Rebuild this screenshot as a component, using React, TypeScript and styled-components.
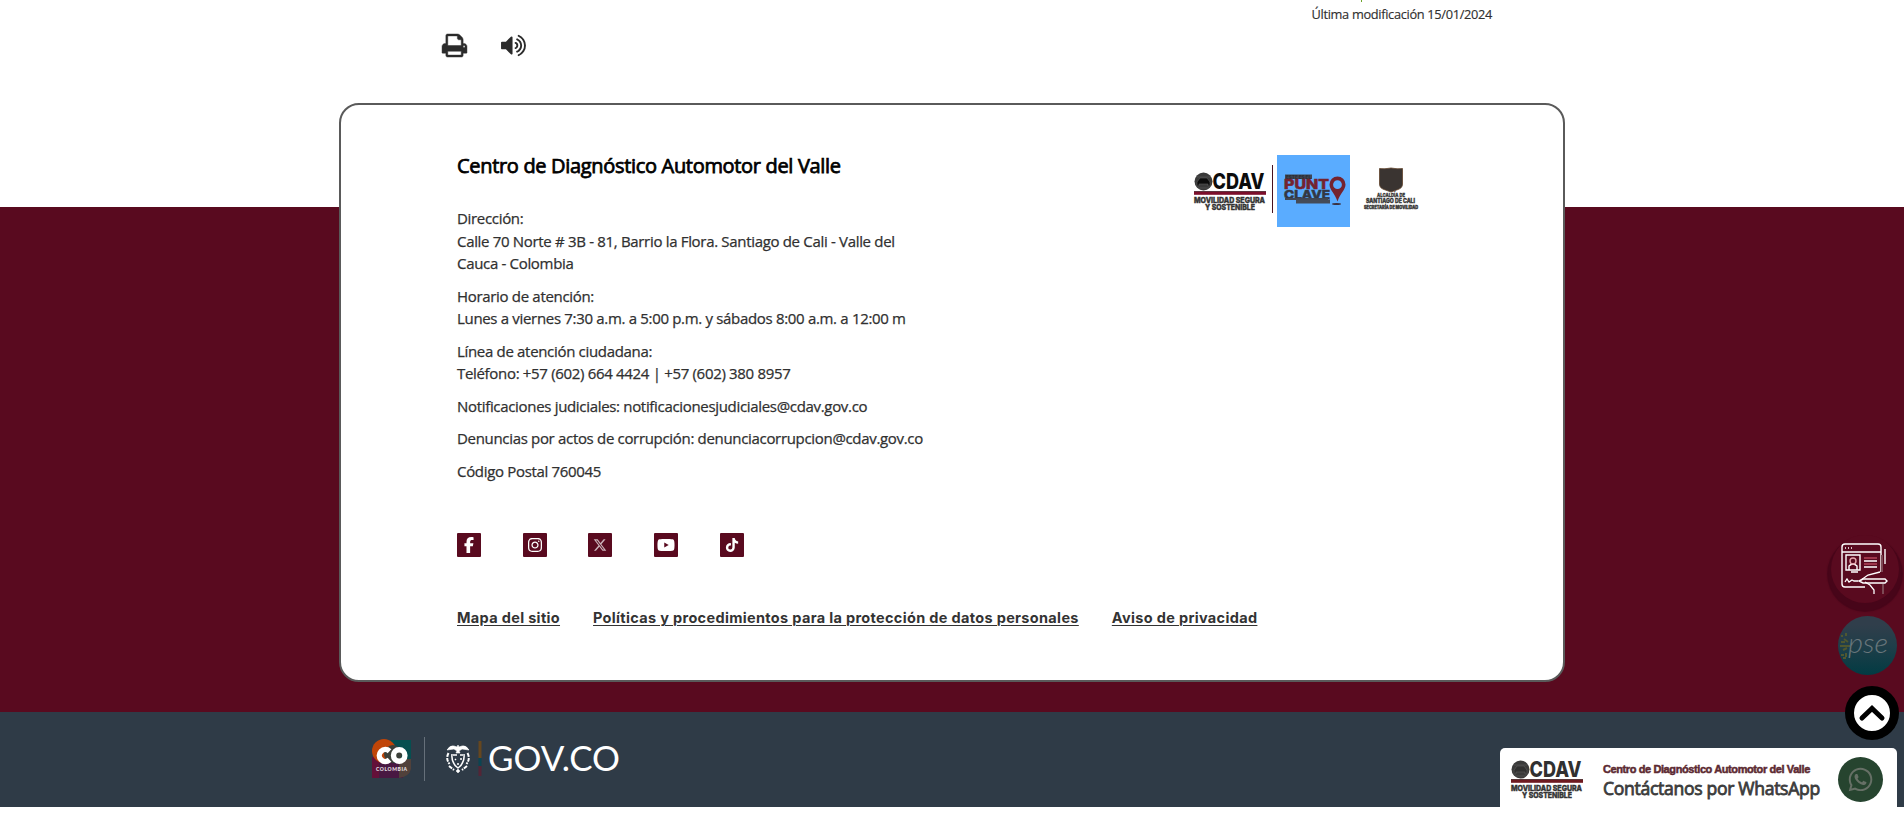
import React from 'react';
import styled, { createGlobalStyle } from 'styled-components';
import { FaFacebookF, FaYoutube, FaTiktok, FaXTwitter, FaInstagram, FaWhatsapp } from 'react-icons/fa6';

const WINE = '#590a1f';
const NAVY = '#2f3b47';

const GlobalStyle = createGlobalStyle`
  * { box-sizing: border-box; }
  body {
    margin: 0;
    background: #fff;
    color: #303030;
    font-family: 'Open Sans', sans-serif;
    font-size: 15px;
    letter-spacing: -0.32px;
    overflow: hidden;
  }
  svg { display: block; flex: none; overflow: visible; }
`;

const Page = styled.div`
  position: relative;
  height: 819px;
  display: flex;
  flex-direction: column;
  overflow: hidden;
`;

const FooterArea = styled.div`
  height: 712px;
  display: flex;
  flex-direction: column;
  align-items: center;
  background: linear-gradient(to bottom, #fff 207px, ${WINE} 207px);
`;

const PageTools = styled.div`
  width: 1051px;
  height: 103px;
  flex: none;
  display: flex;
  justify-content: space-between;
  padding: 0 0 0 15px;
`;

const ToolIcons = styled.div`
  display: flex;
  gap: 34px;
  padding-top: 34px;
`;

const Modified = styled.div`
  width: 166px;
  padding-top: 5px;
  font-size: 12.8px;
  line-height: 19px;
  white-space: nowrap;
  -webkit-text-stroke: 0.15px #303030;
`;

const Tail = styled.i`
  position: absolute;
  top: 0;
  left: 1361px;
  width: 1px;
  height: 2px;
  background: #6da32b;
`;

const Card = styled.main`
  width: 1226px;
  height: 579px;
  flex: none;
  padding: 45px 114px 0 116px;
  background: #fff;
  border: 2px solid #5a5a5a;
  border-radius: 20px;
`;

const CardTop = styled.div`
  display: flex;
  justify-content: space-between;
`;

const Contact = styled.section`
  width: 476px;
  height: 383px;
`;

const Title = styled.h2`
  margin: 0;
  padding: 1px 0 26.4px;
  font-size: 20px;
  font-weight: 400;
  line-height: 30px;
  color: #000;
  -webkit-text-stroke: 0.75px #000;
  white-space: nowrap;
`;

const Paragraph = styled.p`
  margin: 0 0 10px;
  line-height: 22.5px;
  -webkit-text-stroke: 0.25px #303030;
`;

const Logos = styled.div`
  display: flex;
  align-items: flex-start;
  width: 255px;
  padding-top: 5px;
`;

const LogoSlot = styled.div<{ $top: number; $left?: number }>`
  margin-top: ${(p) => p.$top}px;
  margin-left: ${(p) => p.$left ?? 0}px;
`;

const LogoRule = styled.span`
  width: 1px;
  height: 48px;
  margin: 10px 4px 0 6px;
  background: #48111f;
`;

const Social = styled.nav`
  display: flex;
  gap: 41.7px;
`;

const SocialLink = styled.a`
  width: 24px;
  height: 24px;
  display: grid;
  place-items: center;
  border-radius: 1px;
  background: ${WINE};
  color: #fff;
`;

const Links = styled.nav`
  display: flex;
  gap: 33px;
  margin-top: 51px;
`;

const TextLink = styled.a`
  font: 700 14.5px/20px Inter, sans-serif;
  letter-spacing: 0.33px;
  color: #333;
  text-decoration: underline;
  text-decoration-thickness: 1px;
  text-underline-offset: 2px;
  text-decoration-skip-ink: auto;
  white-space: nowrap;
`;

const GovBar = styled.footer`
  height: 95px;
  flex: none;
  display: flex;
  align-items: center;
  padding: 0 0 2px 371px;
  background: ${NAVY};
`;

const GovRule = styled.span`
  width: 1px;
  height: 44px;
  margin: 0 21px 0 11px;
  background: #66707a;
`;

const Floating = styled.aside`
  position: absolute;
  right: 0;
  top: 533px;
  width: 76px;
`;

const FloatButton = styled.button<{ $size: number; $top: number; $right: number }>`
  position: absolute;
  top: ${(p) => p.$top}px;
  right: ${(p) => p.$right}px;
  width: ${(p) => p.$size}px;
  height: ${(p) => p.$size}px;
  display: grid;
  place-items: center;
  padding: 0;
  border: 0;
  border-radius: 50%;
  background: none;
`;

const FormButton = styled(FloatButton)`
  background: ${WINE};
  box-shadow: 0 5px 1px 4px #470519;
`;

const PseButton = styled(FloatButton)`
  background: linear-gradient(#303e4b 15%, #203e49 50%, #023b43);
`;

const UpButton = styled(FloatButton)`
  background: #fff;
  border: 9px solid #000;
`;

const WhatsAppPanel = styled.a`
  position: absolute;
  left: 1500px;
  top: 748px;
  width: 397px;
  height: 59px;
  display: flex;
  align-items: center;
  padding: 4px 14px 0 11px;
  border-radius: 5px 5px 0 0;
  background: #fff;
`;

const PanelText = styled.div`
  flex: 1;
  padding: 3px 0 0 20px;
  white-space: nowrap;
`;

const PanelName = styled.div`
  font: 700 11px/13px 'Liberation Sans', sans-serif;
  letter-spacing: -0.4px;
  color: #5c2a32;
  -webkit-text-stroke: 0.5px #5c2a32;
`;

const PanelAction = styled.div`
  font-size: 17.6px;
  line-height: 24px;
  color: #3c3c3c;
  -webkit-text-stroke: 0.8px #3c3c3c;
`;

const WhatsAppBadge = styled.span`
  width: 45px;
  height: 45px;
  display: grid;
  place-items: center;
  border-radius: 50%;
  background: #26442f;
  color: #667066;
`;

const PrintIcon = () => (
  <svg width="25" height="23" viewBox="0 128 1664 1536" fill="#2b2b2b" stroke="#2b2b2b" strokeWidth="30">
    <path d="M384 1536h896v-256h-896v256zM384 896h896v-384h-160q-40 0-68-28t-28-68v-160h-640v640zM1536 960q0-26-19-45t-45-19-45 19-19 45 19 45 45 19 45-19 19-45zM1664 960v416q0 13-9.5 22.5t-22.5 9.500h-224v160q0 40-28 68t-68 28h-960q-40 0-68-28t-28-68v-160h-224q-13 0-22.500-9.500t-9.500-22.500v-416q0-79 56.500-135.500t135.500-56.500h64v-544q0-40 28-68t68-28h672q40 0 88 20t76 48l152 152q28 28 48 76t20 88v256h64q79 0 135.500 56.500t56.500 135.500z" />
  </svg>
);

const VolumeIcon = () => (
  <svg width="25" height="23" viewBox="0 128 1664 1536" fill="#2b2b2b">
    <path d="M768 352v1088q0 26-19 45t-45 19-45-19l-333-333h-262q-26 0-45-19t-19-45v-384q0-26 19-45t45-19h262l333-333q19-19 45-19t45 19 19 45zM1152 896q0 76-42.5 141.5t-112.5 93.5q-10 5-25 5-26 0-45-18.5t-19-45.5q0-21 12-35.5t29-25 34-23 29-36 12-56.5-12-56.5-29-36-34-23-29-25-12-35.5q0-27 19-45.5t45-18.5q15 0 25 5 70 27 112.5 93t42.5 142zM1408 896q0 153-85 282.5t-225 188.5q-13 5-25 5-27 0-46-19t-19-45q0-39 39-59 56-29 76-44 74-54 115.5-135.5t41.5-173.5-41.5-173.5-115.5-135.5q-20-15-76-44-39-20-39-59 0-26 19-45t45-19q13 0 26 5 140 59 225 188.5t85 282.5zM1664 896q0 230-127 422.5t-338 283.5q-13 5-26 5-26 0-45-19t-19-45q0-36 39-59 7-4 22.5-10.5t22.5-10.5q46-25 82-51 123-91 192-227t69-289-69-289-192-227q-36-26-82-51-7-4-22.5-10.5t-22.5-10.5q-39-23-39-59 0-26 19-45t45-19q13 0 26 5 211 91 338 283.5t127 422.5z" />
  </svg>
);

const CdavLogo = ({ ink = '#0c0c0c', bar = '#7c0f2b' }: { ink?: string; bar?: string }) => (
  <svg width="72" height="39" viewBox="0 0 72 39" fontFamily="Inter, sans-serif" fontWeight="800" letterSpacing="0">
    <circle cx="9.5" cy="9.5" r="9" fill="#3a3a3a" />
    <path d="M3 10l3-4h7l3 4v4h-2v-2H5v2H3zM3 5h13M4 16h11" fill={ink} stroke="#5d5d5d" strokeWidth=".6" />
    <text x="18.5" y="17.2" fontSize="22" textLength="52" lengthAdjust="spacingAndGlyphs" fill={ink}>CDAV</text>
    <rect y="19" width="72" height="1" fill="#4d4d4d" />
    <rect y="19.6" width="72" height="3.2" fill={bar} />
    <text x="0" y="31" fontSize="7.5" textLength="71" lengthAdjust="spacingAndGlyphs" fill="#333" stroke="#333" strokeWidth=".4">MOVILIDAD SEGURA</text>
    <text x="11" y="37.8" fontSize="7.5" textLength="50" lengthAdjust="spacingAndGlyphs" fill="#333" stroke="#333" strokeWidth=".4">Y SOSTENIBLE</text>
  </svg>
);

const PuntoClaveLogo = () => (
  <svg width="73" height="72" viewBox="0 0 73 72" fontFamily="Inter, sans-serif" fontWeight="800" letterSpacing="0">
    <rect width="73" height="72" fill="#5aacff" />
    <rect x="8" y="19.5" width="27" height="4.5" fill="#3f4654" />
    <text x="9" y="23.6" fontSize="4.6" textLength="25" lengthAdjust="spacingAndGlyphs" fill="#2b2d33">ESTE ES EL</text>
    <text x="7" y="34.2" fontSize="13.5" textLength="45" lengthAdjust="spacingAndGlyphs" fill="#74232f" stroke="#74232f" strokeWidth=".5">PUNT</text>
    <text x="7" y="44" fontSize="12" textLength="46" lengthAdjust="spacingAndGlyphs" fill="#333743" stroke="#333743" strokeWidth=".5">CLAVE</text>
    <rect x="8" y="43" width="43" height="2" fill="#3f4654" />
    <rect x="19" y="44.500" width="34" height="4" fill="#444b58" />
    <path d="M60.5 21.5a8 8 0 0 1 8 8c0 5.5-5.500 9-8 17-2.500-8-8-11.500-8-17a8 8 0 0 1 8-8zm0 3.800a4.400 4.400 0 1 0 0 8.800 4.400 4.400 0 0 0 0-8.800z" fill="#74232f" fillRule="evenodd" />
    <ellipse cx="59.500" cy="49" rx="4.500" ry="1" fill="#3a3040" />
  </svg>
);

const AlcaldiaLogo = () => (
  <svg width="54" height="43" viewBox="0 0 54 43" fontFamily="Inter, sans-serif" fontWeight="800" letterSpacing="0" fill="#363636" stroke="#363636">
    <path d="M15.500 1.500q5 .8 11.500-.5 6.500 1.300 11.500.5V17q0 4-4.500 5.500L27 25l-7-2.500Q15.500 21 15.500 17z" fill="#3a3431" stroke="#61442c" strokeWidth=".8" />
    <text x="13" y="29.500" fontSize="5" textLength="28" lengthAdjust="spacingAndGlyphs" strokeWidth=".3">ALCALDÍA DE</text>
    <text x="2" y="35.800" fontSize="6" textLength="49" lengthAdjust="spacingAndGlyphs" strokeWidth=".4">SANTIAGO DE CALI</text>
    <text x="0" y="41.800" fontSize="4.200" textLength="54" lengthAdjust="spacingAndGlyphs" strokeWidth=".4">SECRETARÍA DE MOVILIDAD</text>
  </svg>
);

const ColombiaLogo = () => (
  <svg width="42" height="40" viewBox="0 0 42 40" fontFamily="Lato, sans-serif" fontWeight="900" letterSpacing="0">
    <path d="M20 1h20v24H20z" fill="#064f50" />
    <path d="M1 18h20v21H1z" fill="#641039" />
    <path d="M8 24h24v15H8z" fill="#481842" />
    <path d="M28 20h12v10q-2 8-12 9z" fill="#51413b" />
    <circle cx="13" cy="12" r="12" fill="#c04508" />
    <circle cx="22" cy="15" r="9" fill="#3c4039" />
    <g fill="none" stroke="#fff" strokeWidth="5.400">
      <path d="M18.500 12.200a6 6 0 1 0 0 8.600" />
      <circle cx="28.200" cy="16.500" r="5.700" />
    </g>
    <text x="5" y="32" fontSize="5" textLength="31" fill="#e8e0e4">COLOMBIA</text>
  </svg>
);

const Shield = () => (
  <svg width="24" height="30" viewBox="0 0 24 30" fill="none" stroke="#fff" strokeWidth="1.500">
    <path d="M1 6q3-5 7-4l3 1 1-2 1 2 3-1q4-1 7 4l-7-1-3 2 1 2h-4l1-2-3-2z" fill="#fff" strokeWidth=".6" />
    <path d="M2.500 9q-3 6 1 11M21.500 9q3 6-1 11M3 22l5 4M21 22l-5 4" strokeWidth="2" strokeDasharray="4 1" />
    <path d="M6 10q-1 9 6 14 7-5 6-14" />
    <path d="M7 11h4M14 11h3M9 15l1 1M14 15h2M11 20h2" />
    <path d="M12 25l2 2-2 2-2-2z" fill="#fff" strokeWidth=".5" />
  </svg>
);

const GovCo = () => (
  <svg width="144" height="36" viewBox="0 0 144 36" fontFamily="Lato, sans-serif" letterSpacing="0">
    <path d="M2 0v17" stroke="#66471f" strokeWidth="3" />
    <path d="M2 17v8" stroke="#0b4552" strokeWidth="3" />
    <path d="M2 25v10" stroke="#542536" strokeWidth="3" />
    <text x="10" y="30" fontSize="34" textLength="132" lengthAdjust="spacingAndGlyphs" fill="#fff">GOV.CO</text>
  </svg>
);

const FormIcon = () => (
  <svg width="48" height="52" viewBox="0 0 48 52" fill="none" stroke="#fff" strokeWidth="1.400">
    <path d="M24 44H4q-3 0-3-3V4q0-3 3-3h33q3 0 3 3v25M1 9h39M4 5h1M7 5h1M10 5h1" />
    <path d="M5 12h14v15H5zM8 27v-4q4-4 8 0v4M10 29h7" />
    <circle cx="12" cy="18" r="3" stroke="#e5a6ad" />
    <path d="M23 18h13M23 24h13" />
    <path d="M23 15h13M23 21h13" stroke="#b4445a" />
    <path d="M4 39l2-3 2 3 3-2 2 1h4M20 37l7-5 12-3M24 39l5 3 4 5v4" strokeWidth="1.300" />
    <path d="M18 38l4-2h22l2 2-2 2H22z" />
    <path d="M44 6v15" />
    <path d="M41 12v17M42 41v10" stroke="#7c4954" strokeWidth="2" />
  </svg>
);

const PseIcon = () => (
  <svg width="60" height="40" viewBox="0 0 60 40" letterSpacing="0">
    <path d="M4 9v2M8 7v3M3 16h4M6 13l4 3M2 20h10M5 24l4-2M3 29h3M8 27v4M5 32h3" stroke="#4f5730" strokeWidth="2" />
    <text x="10" y="27" fontFamily="Lato, sans-serif" fontStyle="italic" fontWeight="300" fontSize="27" textLength="40" lengthAdjust="spacingAndGlyphs" fill="#69777c">pse</text>
  </svg>
);

const ChevronUp = () => (
  <svg width="26" height="18" viewBox="0 0 26 18" fill="none" stroke="#000" strokeWidth="5">
    <path d="M3 14L13 4.500 23 14" strokeLinecap="round" />
  </svg>
);

export default function App() {
  return (
    <Page>
      <GlobalStyle />
      <FooterArea>
        <PageTools>
          <ToolIcons>
            <PrintIcon />
            <VolumeIcon />
          </ToolIcons>
          <Modified>Última modificación 15/01/2024</Modified>
        </PageTools>
        <Card>
          <CardTop>
            <Contact>
              <Title>Centro de Diagnóstico Automotor del Valle</Title>
              <Paragraph>
                Dirección:<br />
                Calle 70 Norte # 3B - 81, Barrio la Flora. Santiago de Cali - Valle del<br />
                Cauca - Colombia
              </Paragraph>
              <Paragraph>
                Horario de atención:<br />
                Lunes a viernes 7:30 a.m. a 5:00 p.m. y sábados 8:00 a.m. a 12:00 m
              </Paragraph>
              <Paragraph>
                Línea de atención ciudadana:<br />
                Teléfono: +57 (602) 664 4424 | +57 (602) 380 8957
              </Paragraph>
              <Paragraph>Notificaciones judiciales: notificacionesjudiciales@cdav.gov.co</Paragraph>
              <Paragraph>Denuncias por actos de corrupción: denunciacorrupcion@cdav.gov.co</Paragraph>
              <Paragraph>Código Postal 760045</Paragraph>
            </Contact>
            <Logos>
              <LogoSlot $top={17}><CdavLogo /></LogoSlot>
              <LogoRule />
              <LogoSlot $top={0}><PuntoClaveLogo /></LogoSlot>
              <LogoSlot $top={12} $left={14}><AlcaldiaLogo /></LogoSlot>
            </Logos>
          </CardTop>
          <Social>
            <SocialLink><FaFacebookF size={16} /></SocialLink>
            <SocialLink><FaInstagram size={16} /></SocialLink>
            <SocialLink><FaXTwitter size={14} color="#cbb3ba" /></SocialLink>
            <SocialLink><FaYoutube size={18} /></SocialLink>
            <SocialLink><FaTiktok size={14} /></SocialLink>
          </Social>
          <Links>
            <TextLink>Mapa del sitio</TextLink>
            <TextLink>Políticas y procedimientos para la protección de datos personales</TextLink>
            <TextLink>Aviso de privacidad</TextLink>
          </Links>
        </Card>
      </FooterArea>
      <GovBar>
        <ColombiaLogo />
        <GovRule />
        <Shield />
        <LogoSlot $top={0} $left={8}><GovCo /></LogoSlot>
      </GovBar>
      <Tail />
      <Floating>
        <FormButton $size={68} $top={2} $right={5}><FormIcon /></FormButton>
        <PseButton $size={59} $top={83} $right={7}><PseIcon /></PseButton>
        <UpButton $size={54} $top={153} $right={5}><ChevronUp /></UpButton>
      </Floating>
      <WhatsAppPanel>
        <CdavLogo ink="#303030" bar="#6e1a20" />
        <PanelText>
          <PanelName>Centro de Diagnóstico Automotor del Valle</PanelName>
          <PanelAction>Contáctanos por WhatsApp</PanelAction>
        </PanelText>
        <WhatsAppBadge><FaWhatsapp size={27} /></WhatsAppBadge>
      </WhatsAppPanel>
    </Page>
  );
}
